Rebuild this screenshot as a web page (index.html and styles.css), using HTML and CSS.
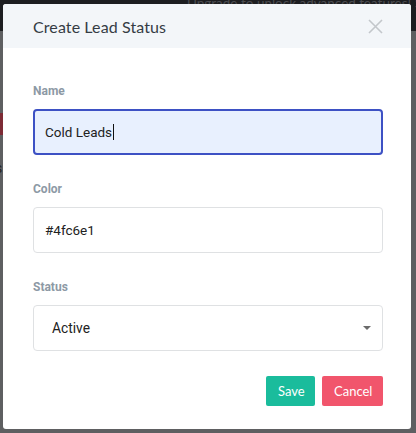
FILE: index.html
```html
<!DOCTYPE html>
<html lang="en">
<head>
<meta charset="utf-8">
<title>Create Lead Status</title>
<link rel="stylesheet" href="styles.css">
</head>
<body>
<div class="page">
  <div class="topbar">
    <span class="upgrade">Upgrade to unlock advanced features! <span class="upgrade-link">S</span></span>
  </div>
  <div class="page-body">
    <div class="red-btn"></div>
    <div class="page-text">s</div>
  </div>
</div>

<div class="modal">
  <div class="modal-header">
    <h2 class="modal-title">Create Lead Status</h2>
    <button class="close" aria-label="Close">
      <svg width="15" height="15" viewBox="0 0 15 15"><path d="M1 1L14 14M14 1L1 14" stroke="#c3c7cb" stroke-width="1.6" fill="none"/></svg>
    </button>
  </div>
  <div class="modal-body">
    <div class="group">
      <label class="label">Name</label>
      <div class="input input-focus">Cold Leads<span class="caret"></span></div>
    </div>
    <div class="group">
      <label class="label">Color</label>
      <div class="input">#4fc6e1</div>
    </div>
    <div class="group">
      <label class="label">Status</label>
      <div class="input select"><span class="select-value">Active</span><span class="arrow"></span></div>
    </div>
    <div class="actions">
      <button class="btn btn-save">Save</button>
      <button class="btn btn-cancel">Cancel</button>
    </div>
  </div>
</div>
</body>
</html>
```

FILE: styles.css
```css
* { box-sizing: border-box; }
html, body {
  margin: 0;
  padding: 0;
  width: 416px;
  height: 433px;
  overflow: hidden;
}
body {
  background: #5c5d5f;
  font-family: Roboto, "Liberation Sans", sans-serif;
  position: relative;
}
.page { height: 433px; display: flex; flex-direction: column; }
.topbar {
  height: 31px;
  background: #1d1e21;
  display: flex;
  justify-content: flex-end;
  align-items: flex-start;
}
.upgrade {
  font-family: Lato, sans-serif;
  font-size: 13.5px;
  color: #4b4c50;
  line-height: 14px;
  margin-top: -4px;
  white-space: nowrap;
  margin-right: -6px;
}
.upgrade-link { color: #7a3038; }
.page-body { flex: 1; position: relative; background: #5e5f61; }
.red-btn {
  width: 6px;
  height: 22px;
  background: #7d2b35;
  margin-top: 82px;
}
.page-text {
  color: #222;
  font-size: 14px;
  margin-top: 25px;
  margin-left: -5px;
}

.modal {
  position: absolute;
  left: 3px;
  top: 4px;
  width: 408px;
  height: 425px;
  background: #fff;
  border-radius: 3px;
  overflow: hidden;
}
.modal-header {
  height: 44px;
  background: #f3f6f9;
  display: flex;
  align-items: center;
  justify-content: space-between;
  padding: 0 28px 0 30px;
}
.modal-title {
  margin: 0;
  font-family: Lato, sans-serif;
  font-weight: 400;
  font-size: 16px;
  color: #353c44;
  letter-spacing: 0.1px;
}
.close {
  border: 0;
  background: none;
  padding: 0;
  width: 15px;
  height: 15px;
  display: flex;
}
.modal-body {
  padding: 34px 28px 0 30px;
}
.group { margin-bottom: 25px; }
.group:last-of-type { margin-bottom: 20px; }
.label {
  display: block;
  font-size: 12px;
  line-height: 18px;
  font-weight: 700;
  color: #8d99a5;
  margin-bottom: 9px;
}
.input {
  height: 46px;
  border: 1px solid #dfe1e3;
  border-radius: 4px;
  background: #fff;
  display: flex;
  align-items: center;
  padding: 0 11px;
  font-size: 13.5px;
  color: #222;
}
.input-focus {
  border: 2px solid #3d51c4;
  background: #e8f0fe;
  padding: 0 10px;
}
.caret {
  display: inline-block;
  width: 1px;
  height: 16px;
  background: #111;
  margin-left: 1px;
}
.select {
  justify-content: space-between;
  padding: 0 11px 0 18px;
}
.select-value { font-size: 13.8px; }
.arrow {
  width: 0;
  height: 0;
  border-left: 4px solid transparent;
  border-right: 4px solid transparent;
  border-top: 4px solid #6b6b6b;
}
.actions {
  display: flex;
  justify-content: flex-end;
  gap: 7px;
}
.btn {
  height: 30px;
  border: 0;
  border-radius: 2px;
  color: #fff;
  font-family: Lato, sans-serif;
  font-size: 13px;
  padding: 0 12px;
}
.btn-save { background: #1abc9c; width: 49px; }
.btn-cancel { background: #f1556c; width: 61px; }
```
